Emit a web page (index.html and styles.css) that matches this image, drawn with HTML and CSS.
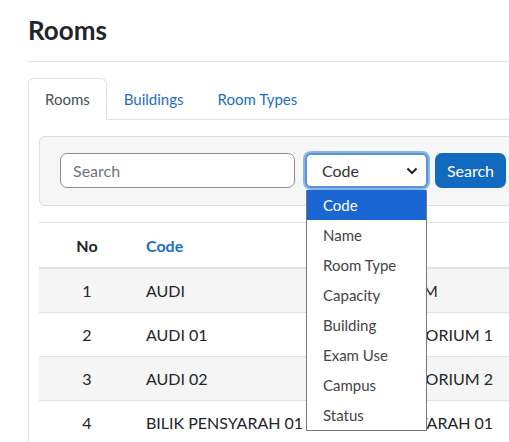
FILE: index.html
```html
<!DOCTYPE html>
<html>
<head>
<meta charset="utf-8">
<link rel="stylesheet" href="styles.css">
</head>
<body>
<div class="page">
  <h1 class="title">Rooms</h1>
  <hr class="rule">
  <ul class="tabs">
    <li class="tab active">Rooms</li>
    <li class="tab">Buildings</li>
    <li class="tab">Room Types</li>
  </ul>
  <div class="tab-content">
    <div class="search-card">
      <input class="search-input" type="text" placeholder="Search">
      <div class="select-wrap">
        <div class="select">
          <span>Code</span>
          <svg class="chev" width="12" height="8" viewBox="0 0 12 8"><path d="M1.5 1.5 L6 6 L10.5 1.5" fill="none" stroke="#222" stroke-width="2"/></svg>
        </div>
        <ul class="dropdown">
          <li class="opt selected">Code</li>
          <li class="opt">Name</li>
          <li class="opt">Room Type</li>
          <li class="opt">Capacity</li>
          <li class="opt">Building</li>
          <li class="opt">Exam Use</li>
          <li class="opt">Campus</li>
          <li class="opt">Status</li>
        </ul>
      </div>
      <button class="btn">Search</button>
    </div>
    <table class="table">
      <thead>
        <tr><th class="c-no">No</th><th class="c-code"><span class="sort">Code</span></th><th class="c-name"><span class="sort">Name</span></th></tr>
      </thead>
      <tbody>
        <tr class="odd"><td class="c-no">1</td><td class="c-code">AUDI</td><td class="c-name">AUDITORIUM</td></tr>
        <tr><td class="c-no">2</td><td class="c-code">AUDI 01</td><td class="c-name">BILIK AUDITORIUM 1</td></tr>
        <tr class="odd"><td class="c-no">3</td><td class="c-code">AUDI 02</td><td class="c-name">BILIK AUDITORIUM 2</td></tr>
        <tr><td class="c-no">4</td><td class="c-code">BILIK PENSYARAH 01</td><td class="c-name">BILIK PENSYARAH 01</td></tr>
      </tbody>
    </table>
  </div>
</div>
</body>
</html>
```
FILE: styles.css
```css
html, body {
  margin: 0;
  padding: 0;
  background: #fff;
  overflow: hidden;
}
body {
  font-family: Lato, "Open Sans", sans-serif;
  color: #212529;
  font-size: 15px;
}
.page {
  width: 560px;
  height: 442px;
  padding: 0 0 0 28px;
  overflow: hidden;
}
.title {
  margin: 0;
  padding-top: 14px;
  font-size: 26px;
  font-weight: 700;
  line-height: 32px;
  color: #212529;
}
.rule {
  margin: 15px 0 0 0;
  border: 0;
  border-top: 1px solid #e3e3e3;
  height: 0;
}
.tabs {
  list-style: none;
  margin: 16px 0 0 0;
  padding: 0;
  display: flex;
  border-bottom: 1px solid #dee2e6;
}
.tab {
  padding: 9px 16px 9px;
  line-height: 22px;
  color: #1b6ec2;
  border: 1px solid transparent;
  border-top-left-radius: 6px;
  border-top-right-radius: 6px;
  margin-bottom: -1px;
}
.tab.active {
  color: #495057;
  border-color: #dee2e6 #dee2e6 #fff;
  background: #fff;
}
.tab-content {
  border-left: 1px solid #dee2e6;
  padding: 16px 0 0 10px;
  height: 330px;
}
.search-card {
  display: flex;
  align-items: center;
  background: #f6f6f6;
  border: 1px solid #dedede;
  border-radius: 6px;
  padding: 16px 20px 17px;
  width: 520px;
}
.search-input {
  box-sizing: border-box;
  width: 235px;
  height: 35px;
  border: 1px solid #8a8f96;
  border-radius: 7px;
  padding: 0 12px;
  font-family: inherit;
  font-size: 16px;
  color: #212529;
  background: #fff;
  outline: none;
}
.search-input::placeholder {
  color: #6c757d;
}
.select-wrap {
  position: relative;
  margin-left: 10px;
}
.select {
  box-sizing: border-box;
  width: 123px;
  height: 35px;
  border: 2px solid #5a94d6;
  box-shadow: 0 0 0 2px #8ab5e6;
  border-radius: 6px;
  background: #fff;
  display: flex;
  align-items: center;
  justify-content: space-between;
  padding: 0 8px 0 15px;
  color: #333;
  font-size: 16px;
}
.chev {
  display: block;
}
.dropdown {
  position: absolute;
  left: 1px;
  top: 37px;
  width: 121px;
  box-sizing: border-box;
  margin: 0;
  padding: 0;
  list-style: none;
  background: #fff;
  border: 1px solid #777;
  border-top: 0;
  z-index: 5;
}
.opt {
  height: 30px;
  line-height: 30px;
  padding-left: 16px;
  color: #444;
}
.opt.selected {
  background: #1a66d2;
  color: #fff;
}
.btn {
  margin-left: 7px;
  height: 35px;
  width: 71px;
  padding: 0;
  border: 0;
  border-radius: 7px;
  background: #1169c0;
  color: #fff;
  font-family: inherit;
  font-size: 16px;
}
.table {
  margin-top: 16px;
  border-collapse: collapse;
  width: 520px;
  font-size: 16px;
}
.table th, .table td {
  text-align: left;
  padding: 0 0 0 11px;
  white-space: nowrap;
}
.table thead tr {
  border-top: 1px solid #dee2e6;
  border-bottom: 2px solid #dee2e6;
}
.table th {
  height: 44px;
  font-weight: 700;
}
.table td {
  height: 43px;
  color: #212529;
}
.table tbody tr {
  border-bottom: 1px solid #dee2e6;
}
.table tr.odd {
  background: #f5f5f5;
}
.table .c-no {
  width: 96px;
  padding: 0;
  text-align: center;
}
.table .c-code {
  width: 179px;
}
.sort {
  color: #1b6ec2;
}
```
